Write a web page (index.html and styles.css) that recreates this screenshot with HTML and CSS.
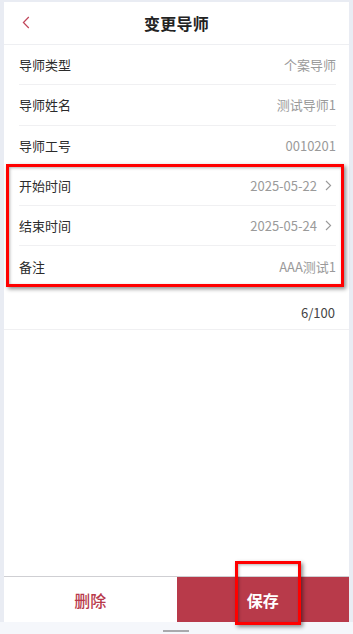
FILE: index.html
```html
<!DOCTYPE html>
<html lang="zh">
<head>
<meta charset="utf-8">
<title>变更导师</title>
<link rel="stylesheet" href="styles.css">
</head>
<body>
<div class="app">
  <div class="panel">
    <header class="nav">
      <span class="back">
        <svg width="8" height="13" viewBox="0 0 8 13"><path d="M6.8 1 L1.4 6.5 L6.8 12" fill="none" stroke="#c0455a" stroke-width="1.2"/></svg>
      </span>
      <h1 class="title">变更导师</h1>
    </header>
    <div class="list">
      <div class="row"><span class="label">导师类型</span><span class="value">个案导师</span></div>
      <div class="row"><span class="label">导师姓名</span><span class="value">测试导师1</span></div>
      <div class="row"><span class="label">导师工号</span><span class="value">0010201</span></div>
      <div class="row"><span class="label">开始时间</span><span class="value">2025-05-22<svg class="chev" width="7" height="11" viewBox="0 0 7 11"><path d="M1 1 L5.6 5.5 L1 10" fill="none" stroke="#9a9a9a" stroke-width="1.1"/></svg></span></div>
      <div class="row"><span class="label">结束时间</span><span class="value">2025-05-24<svg class="chev" width="7" height="11" viewBox="0 0 7 11"><path d="M1 1 L5.6 5.5 L1 10" fill="none" stroke="#9a9a9a" stroke-width="1.1"/></svg></span></div>
      <div class="row last"><span class="label">备注</span><span class="value">AAA测试1</span></div>
    </div>
    <div class="counter">6/100</div>
    <div class="spacer"></div>
    <footer class="actions">
      <button class="btn btn-delete">删除</button>
      <button class="btn btn-save">保存</button>
    </footer>
  </div>
  <div class="home"><span class="home-bar"></span></div>
</div>
<div class="mark mark-form"></div>
<div class="mark mark-save"></div>
</body>
</html>
```
FILE: styles.css
```css
* { box-sizing: border-box; }
html, body { margin: 0; padding: 0; }
body {
  width: 353px;
  height: 634px;
  background: #e9ecf3;
  font-family: "Noto Sans CJK SC", "Noto Sans", sans-serif;
  position: relative;
  overflow: hidden;
}
.app {
  display: flex;
  flex-direction: column;
  height: 634px;
}
.panel {
  flex: 1;
  margin: 2px 4px 0 4px;
  background: #fff;
  display: flex;
  flex-direction: column;
}
.nav {
  height: 43px;
  display: flex;
  align-items: center;
  justify-content: center;
  position: relative;
  border-bottom: 1px solid #eeeff2;
}
.back {
  position: absolute;
  left: 18px;
  top: 14px;
  display: flex;
}
.title {
  margin: 0;
  font-size: 16px;
  font-weight: 700;
  color: #222;
  letter-spacing: 0.2px;
}
.list {
  padding: 0 13px 0 15px;
}
.row {
  height: 40.3px;
  display: flex;
  align-items: center;
  justify-content: space-between;
  border-bottom: 1px solid #f0f0f2;
  font-size: 13px;
}
.row.last { border-bottom: none; }
.label { color: #2b2b2b; }
.value {
  color: #9a9a9a;
  display: flex;
  align-items: center;
}
.chev { margin: 0 4px 0 8px; }
.counter {
  height: 43px;
  display: flex;
  align-items: flex-end;
  justify-content: flex-end;
  padding: 0 14px 7px 0;
  font-size: 13px;
  color: #444;
  border-bottom: 1px solid #f0f0f2;
}
.spacer { flex: 1; }
.actions {
  display: flex;
  height: 46px;
  border-top: 1px solid #cfcfd3;
}
.btn {
  flex: 1;
  border: none;
  margin: 0;
  padding: 0;
  font-family: "Noto Sans CJK SC", "Noto Sans", sans-serif;
  font-size: 16px;
  font-weight: 500;
  cursor: pointer;
}
.btn-delete {
  background: #fff;
  color: #b83a4b;
}
.btn-save {
  background: #b83a4a;
  color: #fff;
  font-weight: 700;
}
.home {
  height: 12px;
  background: #f5f7fb;
  display: flex;
  justify-content: center;
  align-items: flex-end;
  padding-bottom: 2px;
}
.home-bar {
  width: 26px;
  height: 2px;
  background: #a9a9ad;
  margin-left: -2px;
}
.mark {
  position: absolute;
  border: 3px solid #ff0000;
  box-shadow: 2px 2px 4px rgba(0,0,0,0.45), inset 1px 1px 3px rgba(0,0,0,0.3);
}
.mark-form {
  left: 6px;
  top: 164px;
  width: 338px;
  height: 123px;
}
.mark-save {
  left: 235px;
  top: 561px;
  width: 66px;
  height: 64px;
}
```
